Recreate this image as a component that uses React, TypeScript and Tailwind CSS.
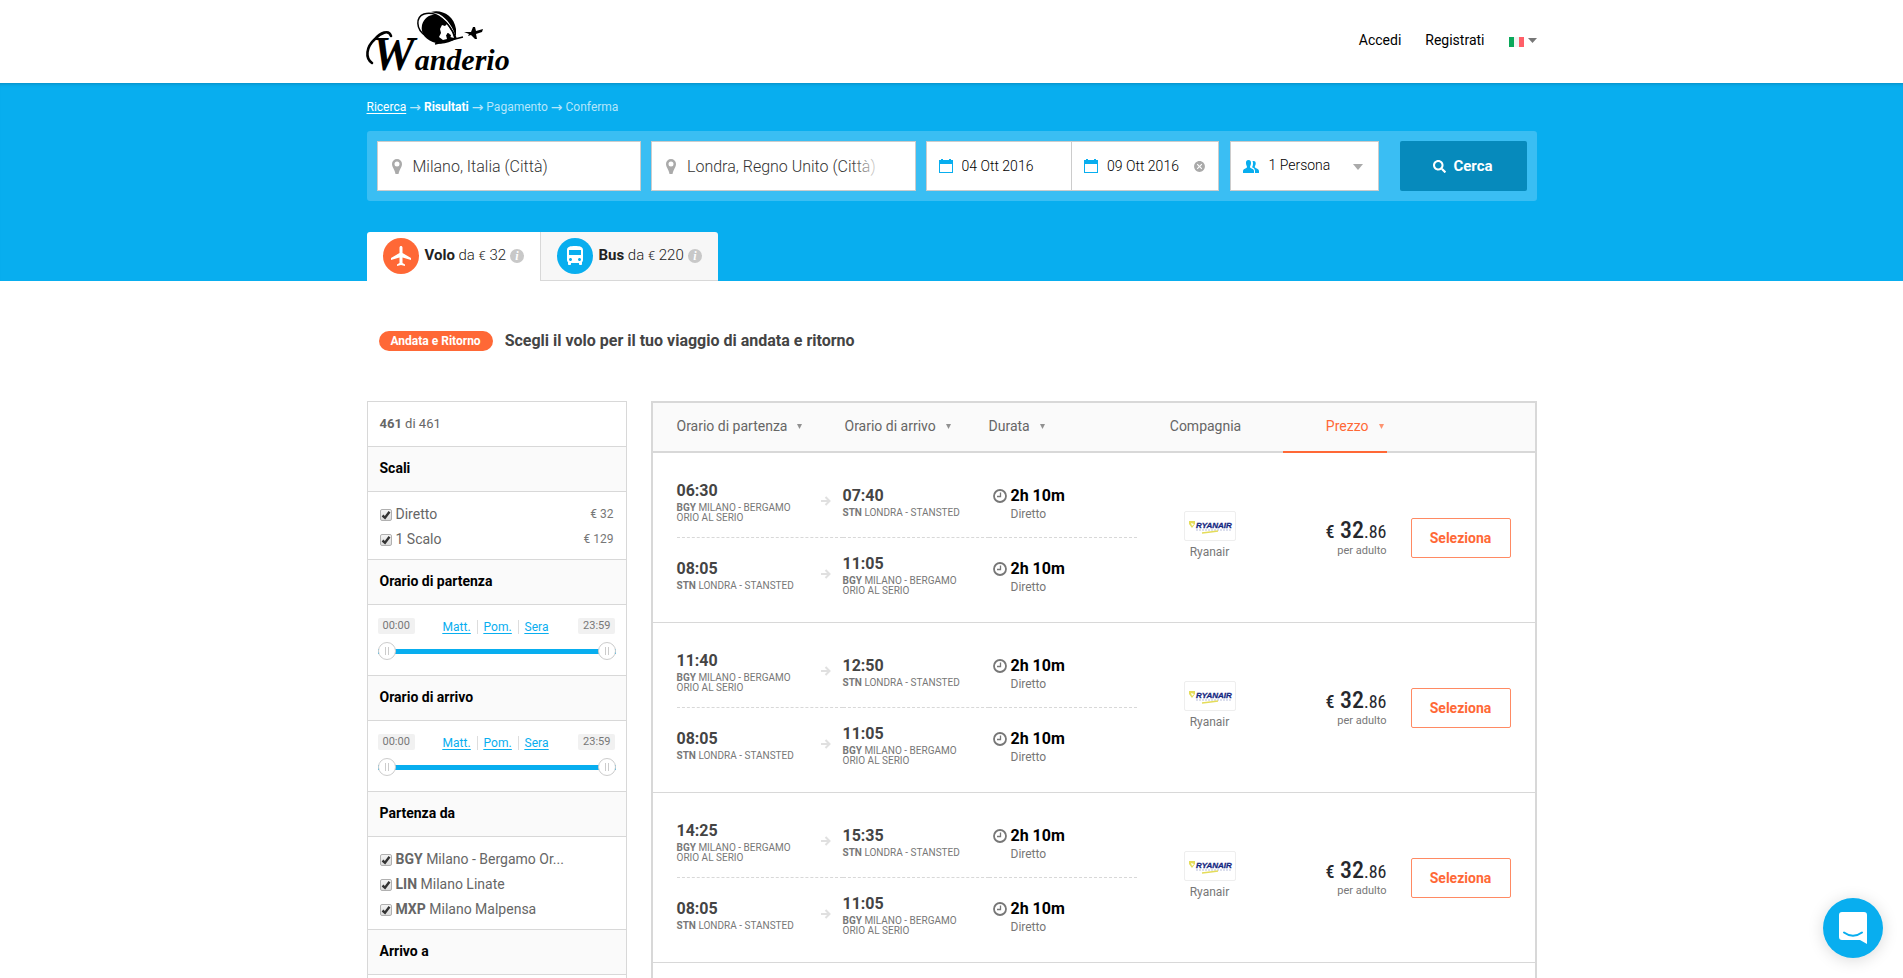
import type { ReactNode } from 'react';
import { FaSearch } from 'react-icons/fa';
import { MdAirplanemodeActive, MdCancel, MdDirectionsBus } from 'react-icons/md';

type Stop = { time: string; code: string; name: string };
type Leg = { from: Stop; to: Stop; duration: string; stops: string };

const bergamo = { code: 'BGY', name: 'Milano - Bergamo Orio al Serio' };
const stansted = { code: 'STN', name: 'Londra - Stansted' };

const flights: Leg[][] = [
  ['06:30', '07:40'],
  ['11:40', '12:50'],
  ['14:25', '15:35'],
  ['20:10', '21:20'],
].map(([departure, arrival]) => [
  { from: { time: departure, ...bergamo }, to: { time: arrival, ...stansted }, duration: '2h 10m', stops: 'Diretto' },
  { from: { time: '08:05', ...stansted }, to: { time: '11:05', ...bergamo }, duration: '2h 10m', stops: 'Diretto' },
]);

const stopFilters = [
  { label: 'Diretto', price: '€ 32' },
  { label: '1 Scalo', price: '€ 129' },
];

const departureAirports = [
  { code: 'BGY', label: 'Milano - Bergamo Or...' },
  { code: 'LIN', label: 'Milano Linate' },
  { code: 'MXP', label: 'Milano Malpensa' },
];

const arrivalAirports = [
  { code: 'STN', label: 'Londra Stansted' },
  { code: 'LGW', label: 'Londra Gatwick' },
];

function Logo() {
  return (
    <svg viewBox="0 0 144 62" className="h-[62px] w-[144px] overflow-visible" role="img" aria-label="Wanderio">
      {/* globe */}
      <path d="M55 14C57 7 63 3 69 4C79 8 86 17 89 28C83 31 76 34 69 32C60 30 53 23 55 14Z" fill="#000" />
      <path d="M64 1C74 -2 87 4 89 18L89 26C86 17 81 8 72 3Z" fill="#000" />
      <path d="M75 14l3 1 2-2 5 8 2 6-4-1-1-4-3 2 1 4-4 1-4-3 2-4-1-4Z" fill="#fff" />
      <path d="M80 22l4 2-1 4-3-2Z" fill="#000" />
      {/* orbit and plane */}
      <path d="M59 25C48 18 49 6 57 3C69 -1 82 11 89 27" fill="none" stroke="#000" strokeWidth="1.5" />
      <path d="M68 33C80 30 88 28 96 26" fill="none" stroke="#000" strokeWidth="1.3" />
      <path d="M97 21l7 0 2-5h2l1 4 7-2-1 3-6 2 1 5-2 0-4-4-3 1 1-2Z" fill="#000" />
      {/* wordmark */}
      <path d="M5 52C-2 47 -1 36 8 28C13 22 22 18 24 25" fill="none" stroke="#000" strokeWidth="2.6" strokeLinecap="round" />
      <text x="5" y="59" fill="#000" fontStyle="italic" fontWeight="700" fontFamily="'Liberation Serif', serif">
        <tspan fontSize="48">W</tspan>
        <tspan fontSize="30">anderio</tspan>
      </text>
    </svg>
  );
}

function Pin() {
  return (
    <svg viewBox="0 0 10 15" className="h-[15px] w-[10px] shrink-0" fill="#aaa" fillRule="evenodd">
      <path d="M5 0a5 5 0 0 1 5 5c0 3-2.500 5-3.500 10h-3C2.500 10 0 8 0 5a5 5 0 0 1 5-5Zm0 2.500a2.500 2.500 0 1 0 0 5 2.500 2.500 0 0 0 0-5Z" />
    </svg>
  );
}

function CalendarIcon() {
  return (
    <svg viewBox="0 0 14 14" className="h-[14px] w-[14px] shrink-0" fill="#08aeef" fillRule="evenodd">
      <path d="M2 0h2v1h6V0h2v1h2v13H0V1h2Zm-1 5v8h12V5Z" />
    </svg>
  );
}

function PeopleIcon() {
  return (
    <svg viewBox="0 0 16 13" className="h-[13px] w-4 shrink-0" fill="#08aeef">
      <path d="M5.500 0C7.500 0 8.200 1.500 8 3.500 7.900 5 7 6 7 7c0 1.500 4 1.500 4 4v2H0v-2c0-2.500 4-2.500 4-4 0-1-.9-2-1-3.500C2.800 1.500 3.500 0 5.500 0Z" />
      <path d="M10.500 1c1.800 0 2.400 1.300 2.200 3-.1 1.200-.9 2-.9 3 0 1.400 4.200 1.500 4.200 4v2h-4v-2c0-2-1.500-3-3-3.700.7-1 .9-2.300 1-3.300.1-1.200-.1-2.200-.5-2.900Z" />
    </svg>
  );
}

function InfoIcon() {
  return (
    <svg viewBox="0 0 14 14" className="h-[14px] w-[14px]">
      <circle cx="7" cy="7" r="7" fill="#c8c8c8" />
      <text x="7" y="11" textAnchor="middle" fontSize="12" fontWeight="700" fontStyle="italic" fontFamily="'Liberation Serif', serif" fill="#fff">i</text>
    </svg>
  );
}

function ClockIcon() {
  return (
    <svg viewBox="0 0 14 14" className="h-[14px] w-[14px] shrink-0" fill="none" stroke="#777">
      <circle cx="7" cy="7" r="6" strokeWidth="1.800" />
      <path d="M7.500 3.500V7.500H4" strokeWidth="1.300" />
    </svg>
  );
}

function ArrowIcon() {
  return (
    <svg viewBox="0 0 10 10" className="h-[10px] w-[10px]" fill="none" stroke="#e0e0e0" strokeWidth="2">
      <path d="M0 5h8M4.500 1l4 4-4 4" />
    </svg>
  );
}

function Caret({ className }: { className: string }) {
  return (
    <svg viewBox="0 0 10 6" preserveAspectRatio="none" className={className} fill="currentColor">
      <path d="M0 0h10L5 6Z" />
    </svg>
  );
}

function AirlineLogo() {
  return (
    <svg viewBox="0 0 50 28" className="h-[28px] w-[50px]">
      <path d="M4 9h6v3l-3 4-3-4Z" fill="#e4dc5a" />
      <path d="M6 11l3 1-2 2Z" fill="#fff" />
      <text x="11" y="16" fontSize="8" fontWeight="700" fontStyle="italic" fontFamily="'Liberation Sans', Arial, sans-serif" fill="#13267f" stroke="#13267f" strokeWidth="0.300">RYANAIR</text>
      <path d="M11 18h35" stroke="#b9bfdc" strokeDasharray="2 1" />
      <path d="M17 21q9-1 16-2" stroke="#e4dc5a" strokeWidth="1.500" fill="none" />
    </svg>
  );
}

function Header() {
  return (
    <header className="bg-white">
      <div className="mx-auto flex h-[83px] max-w-[1170px] items-start justify-between">
        <a href="#" className="mt-[11px]">
          <Logo />
        </a>
        <nav className="mt-[30px] flex items-center gap-6 text-sm leading-5 text-black">
          <a href="#">Accedi</a>
          <a href="#">Registrati</a>
          <button type="button" aria-label="Lingua" className="flex items-center gap-[3px]">
            <span className="mt-1 flex h-[10px] w-4">
              <span className="flex-1 bg-[#0aa85a]" />
              <span className="flex-1 bg-[#f3f3f3]" />
              <span className="flex-1 bg-[#ff5f68]" />
            </span>
            <Caret className="h-[5px] w-[9px] text-[#777]" />
          </button>
        </nav>
      </div>
    </header>
  );
}

function SearchBar() {
  return (
    <form className="mt-[14px] flex h-[70px] rounded-[3px] bg-[#3abef3] p-[10px] text-[#333]">
      <label className="mr-[10px] flex flex-1 items-center gap-[11px] border border-[#ccc] bg-white pl-[14px]">
        <Pin />
        <input aria-label="Partenza" defaultValue="Milano, Italia (Città)" className="w-full min-w-0 pt-[2px] text-base font-light outline-none" />
      </label>
      <label className="relative mr-[10px] flex flex-1 items-center gap-[11px] border border-[#ccc] bg-white pl-[14px]">
        <Pin />
        <input aria-label="Arrivo" defaultValue="Londra, Regno Unito (Città)" className="w-full min-w-0 pt-[2px] text-base font-light outline-none" />
        <span className="absolute inset-y-0 right-8 w-8 bg-linear-to-r from-transparent to-white" />
      </label>
      <div className="mr-[11px] flex w-[293px] border border-[#ccc] bg-white text-sm font-light text-black">
        <label className="flex w-1/2 items-center gap-[9px] border-r border-[#ccc] pl-3">
          <CalendarIcon />
          <input aria-label="Data di andata" defaultValue="04 Ott 2016" className="w-full min-w-0 outline-none" />
        </label>
        <label className="flex w-1/2 items-center gap-[9px] px-3">
          <CalendarIcon />
          <input aria-label="Data di ritorno" defaultValue="09 Ott 2016" className="w-full min-w-0 outline-none" />
          <button type="button" aria-label="Rimuovi ritorno">
            <MdCancel className="h-[13px] w-[13px] text-[#aaa]" />
          </button>
        </label>
      </div>
      <label className="mr-[21px] flex w-[149px] items-center border border-[#ccc] bg-white px-3 text-black">
        <PeopleIcon />
        <select aria-label="Passeggeri" className="mb-[3px] ml-[10px] w-full appearance-none text-sm font-light outline-none">
          <option>1 Persona</option>
          <option>2 Persone</option>
        </select>
        <Caret className="mt-[2px] mr-[3px] h-[6px] w-[10px] shrink-0 text-[#aaa]" />
      </label>
      <button type="submit" className="flex w-[127px] items-center justify-center gap-[7px] rounded-[2px] bg-[#068abc] text-[15px] font-bold text-white">
        <FaSearch className="h-[13px] w-[13px]" />
        Cerca
      </button>
    </form>
  );
}

function Tabs() {
  return (
    <div role="tablist" className="mt-[31px] flex h-[49px] text-[15px] text-[#222]">
      <button type="button" role="tab" aria-selected="true" className="flex w-[173px] items-center gap-[6px] rounded-tl-[3px] bg-white pb-[2px] pl-4">
        <span className="flex h-9 w-9 items-center justify-center rounded-full bg-[#ff6836]">
          <MdAirplanemodeActive className="h-6 w-6 text-white" />
        </span>
        <span className="flex items-center gap-1 font-light">
          <span>
            <b className="font-bold">Volo</b> da <span className="text-[13px]">€</span> 32
          </span>
          <InfoIcon />
        </span>
      </button>
      <button type="button" role="tab" aria-selected="false" className="flex w-[178px] items-center gap-[6px] rounded-tr-[3px] border-b border-l border-[#d8d8d8] bg-[#f7f7f7] pb-px pl-4">
        <span className="flex h-9 w-9 items-center justify-center rounded-full bg-[#08aeef]">
          <MdDirectionsBus className="h-6 w-6 text-white" />
        </span>
        <span className="flex items-center gap-1 font-light">
          <span>
            <b className="font-bold">Bus</b> da <span className="text-[13px]">€</span> 220
          </span>
          <InfoIcon />
        </span>
      </button>
    </div>
  );
}

function FilterTitle({ children }: { children: ReactNode }) {
  return <h3 className="h-[45px] border-b border-[#d8d8d8] bg-[#fafafa] px-3 text-sm leading-[43px] font-bold text-black">{children}</h3>;
}

function FilterCheck({ children, price }: { children: ReactNode; price?: string }) {
  return (
    <label className="flex h-[25px] items-center">
      <span className="relative mt-[2px] mr-1 h-3 w-3">
        <input
          type="checkbox"
          defaultChecked
          className="peer block h-3 w-3 appearance-none rounded-[2px] border border-[#b0b0b0] bg-linear-to-b from-[#f4f4f4] to-[#dcdcdc]"
        />
        <svg viewBox="0 0 12 12" className="pointer-events-none absolute inset-0 hidden h-3 w-3 peer-checked:block" fill="none" stroke="#333" strokeWidth="2.400">
          <path d="M2.500 6.500L5 8.800L9.500 2.800" />
        </svg>
      </span>
      <span className="text-sm">{children}</span>
      {price && <span className="ml-auto text-xs text-[#777]">{price}</span>}
    </label>
  );
}

const thumbClass =
  'pointer-events-none absolute inset-0 h-[18px] w-full appearance-none bg-transparent [&::-webkit-slider-thumb]:pointer-events-auto [&::-webkit-slider-thumb]:h-[18px] [&::-webkit-slider-thumb]:w-[18px] [&::-webkit-slider-thumb]:appearance-none [&::-webkit-slider-thumb]:rounded-full [&::-webkit-slider-thumb]:border [&::-webkit-slider-thumb]:border-[#ccc] [&::-webkit-slider-thumb]:bg-white [&::-webkit-slider-thumb]:bg-[linear-gradient(90deg,#ccc_1px,#fff_1px_3px,#ccc_3px)] [&::-webkit-slider-thumb]:bg-[length:4px_8px] [&::-webkit-slider-thumb]:bg-center [&::-webkit-slider-thumb]:bg-no-repeat';

function TimeFilter({ title }: { title: string }) {
  return (
    <>
      <FilterTitle>{title}</FilterTitle>
      <div className="h-[71px] border-b border-[#d8d8d8] px-[10px] pt-[13px]">
        <div className="flex items-center justify-between text-[11px] leading-4 text-[#777]">
          <span className="rounded-[2px] bg-[#f1f1f1] px-[5px]">00:00</span>
          <div className="flex pt-[2px] pr-[2px] text-xs leading-[14px] text-[#08aeef] underline underline-offset-2">
            <a href="#" className="px-[6px]">Matt.</a>
            <a href="#" className="border-x border-[#ddd] px-[6px]">Pom.</a>
            <a href="#" className="px-[6px]">Sera</a>
          </div>
          <span className="rounded-[2px] bg-[#f1f1f1] px-[5px]">23:59</span>
        </div>
        <div className="relative mt-2 flex h-[18px] items-center">
          <div className="h-[5px] w-full bg-[#08aeef]" />
          <input type="range" min="0" max="1439" defaultValue="0" aria-label={`${title}, minimo`} className={thumbClass} />
          <input type="range" min="0" max="1439" defaultValue="1439" aria-label={`${title}, massimo`} className={thumbClass} />
        </div>
      </div>
    </>
  );
}

function AirportFilter({ title, airports }: { title: string; airports: { code: string; label: string }[] }) {
  return (
    <>
      <FilterTitle>{title}</FilterTitle>
      <div className="border-b border-[#d8d8d8] px-3 pt-[9px] pb-2">
        {airports.map((airport) => (
          <FilterCheck key={airport.code}>
            <b className="font-bold">{airport.code}</b> {airport.label}
          </FilterCheck>
        ))}
      </div>
    </>
  );
}

function Sidebar() {
  return (
    <aside className="w-[260px] shrink-0 self-start border border-b-0 border-[#d8d8d8] text-[#666]">
      <p className="h-[45px] border-b border-[#d8d8d8] px-3 text-[13px] leading-[43px]">
        <b className="font-bold">461</b> di 461
      </p>
      <FilterTitle>Scali</FilterTitle>
      <div className="border-b border-[#d8d8d8] px-3 pt-[9px] pb-2">
        {stopFilters.map((filter) => (
          <FilterCheck key={filter.label} price={filter.price}>
            {filter.label}
          </FilterCheck>
        ))}
      </div>
      <TimeFilter title="Orario di partenza" />
      <TimeFilter title="Orario di arrivo" />
      <AirportFilter title="Partenza da" airports={departureAirports} />
      <AirportFilter title="Arrivo a" airports={arrivalAirports} />
    </aside>
  );
}

function StopInfo({ stop }: { stop: Stop }) {
  return (
    <div className="w-[125px]">
      <div className="text-base leading-6 font-bold text-[#444]">{stop.time}</div>
      <div className="text-[10px] leading-[10px] text-[#777] uppercase">
        <b className="font-bold">{stop.code}</b> {stop.name}
      </div>
    </div>
  );
}

function SortButton({ children }: { children: ReactNode }) {
  return (
    <button type="button" className="inline-flex items-center gap-[10px] pb-[2px]">
      {children}
      <Caret className="h-[5px] w-[5px] opacity-70" />
    </button>
  );
}

function FlightRows({ legs }: { legs: Leg[] }) {
  return (
    <tbody>
      {legs.map((leg, index) => {
        const last = index === legs.length - 1;
        const cell = last ? 'border-b border-[#d8d8d8] pb-3' : 'pt-3';
        const inner = last ? 'flex h-[72px] items-center' : 'flex h-[73px] items-center border-b border-dashed border-[#d8d8d8]';
        return (
          <tr key={index}>
            <td className={`${cell} pl-6`}>
              <div className={`${inner} justify-between pr-3`}>
                <StopInfo stop={leg.from} />
                <ArrowIcon />
              </div>
            </td>
            <td className={cell}>
              <div className={inner}>
                <StopInfo stop={leg.to} />
              </div>
            </td>
            <td className={cell}>
              <div className={`${inner} pl-1`}>
                <div className="pt-[2px]">
                  <div className="flex items-center gap-1 text-base leading-6 font-bold text-black">
                    <ClockIcon />
                    {leg.duration}
                  </div>
                  <div className="pl-[18px] text-xs leading-3 text-[#777]">{leg.stops}</div>
                </div>
              </div>
            </td>
            {index === 0 && (
              <>
                <td rowSpan={2} className="border-b border-[#d8d8d8] pb-1 text-center text-xs leading-4 text-[#777]">
                  <div className="mx-auto mb-[3px] h-[30px] w-[52px] rounded-[2px] border border-[#eee]">
                    <AirlineLogo />
                  </div>
                  Ryanair
                </td>
                <td rowSpan={2} className="border-b border-[#d8d8d8] text-right">
                  <div className="font-['Roboto_Condensed',Roboto,sans-serif] text-2xl leading-6 font-medium text-[#26282e]">
                    <span className="text-[18px]">€</span> 32<span className="text-[18px] font-normal">.86</span>
                  </div>
                  <div className="text-[11px] leading-[14px] text-[#777]">per adulto</div>
                </td>
                <td rowSpan={2} className="border-b border-[#d8d8d8] pl-6">
                  <button type="button" className="block h-10 w-[100px] rounded-[2px] border border-[#ff8a63] text-sm font-bold text-[#ff6836]">
                    Seleziona
                  </button>
                </td>
              </>
            )}
          </tr>
        );
      })}
    </tbody>
  );
}

function Results() {
  return (
    <div className="min-w-0 flex-1 border-2 border-[#d8d8d8]">
      <table className="w-full table-fixed border-separate border-spacing-0">
        <colgroup>
          <col />
          <col className="w-[146px]" />
          <col className="w-[148px]" />
          <col className="w-[146px]" />
          <col className="w-[104px]" />
          <col className="w-[148px]" />
        </colgroup>
        <thead className="bg-[#fafafa] text-left text-sm text-[#666]">
          <tr>
            <th className="h-[50px] border-b-2 border-[#d8d8d8] pl-6 font-normal">
              <SortButton>Orario di partenza</SortButton>
            </th>
            <th className="border-b-2 border-[#d8d8d8] pl-[2px] font-normal">
              <SortButton>Orario di arrivo</SortButton>
            </th>
            <th className="border-b-2 border-[#d8d8d8] font-normal">
              <SortButton>Durata</SortButton>
            </th>
            <th className="border-b-2 border-[#d8d8d8] pr-2 pb-[2px] text-center font-normal">Compagnia</th>
            <th className="border-b-2 border-[#ff6836] pr-[3px] text-right font-normal text-[#ff6836]">
              <SortButton>Prezzo</SortButton>
            </th>
            <th aria-label="Azioni" className="border-b-2 border-[#d8d8d8]" />
          </tr>
        </thead>
        {flights.map((legs) => (
          <FlightRows key={legs[0].from.time} legs={legs} />
        ))}
      </table>
    </div>
  );
}

function ChatButton() {
  return (
    <button
      type="button"
      aria-label="Chat"
      className="fixed right-5 bottom-5 flex h-[60px] w-[60px] items-center justify-center rounded-full bg-[#08aeef] shadow-[0_2px_16px_rgba(0,0,0,0.15)]"
    >
      <svg viewBox="0 0 28 32" className="h-8 w-7">
        <path d="M3 0h22a3 3 0 0 1 3 3v29l-7-4H3a3 3 0 0 1-3-3V3a3 3 0 0 1 3-3Z" fill="#fff" />
        <path d="M5 20.500q9 6.500 18 0" fill="none" stroke="#08aeef" strokeWidth="2" strokeLinecap="round" />
      </svg>
    </button>
  );
}

export default function App() {
  return (
    <div className="min-h-screen bg-white font-[Roboto,'Liberation_Sans',sans-serif]">
      <Header />
      <div className="bg-[#08aeef] shadow-[inset_0_4px_4px_-4px_rgba(0,0,0,0.3)]">
        <div className="mx-auto max-w-[1170px]">
          <nav aria-label="Passaggi" className="flex items-center gap-[3px] pt-[15px] text-xs leading-[19px] text-[#b5e6fb]">
            <a href="#" className="text-white underline underline-offset-2">Ricerca</a>
            <span className="font-['DejaVu_Sans',sans-serif] text-sm leading-[19px]">→</span>
            <b className="font-bold text-white">Risultati</b>
            <span className="font-['DejaVu_Sans',sans-serif] text-sm leading-[19px]">→</span>
            <span>Pagamento</span>
            <span className="font-['DejaVu_Sans',sans-serif] text-sm leading-[19px]">→</span>
            <span>Conferma</span>
          </nav>
          <SearchBar />
          <Tabs />
        </div>
      </div>
      <main className="mx-auto max-w-[1170px]">
        <div className="flex items-center gap-3 pt-[50px] pb-[50px] pl-3">
          <span className="rounded-full bg-[#ff6836] px-3 text-xs leading-5 font-bold text-white">Andata e Ritorno</span>
          <h2 className="text-base leading-5 font-bold text-[#444]">Scegli il volo per il tuo viaggio di andata e ritorno</h2>
        </div>
        <div className="flex gap-6">
          <Sidebar />
          <Results />
        </div>
      </main>
      <ChatButton />
    </div>
  );
}
